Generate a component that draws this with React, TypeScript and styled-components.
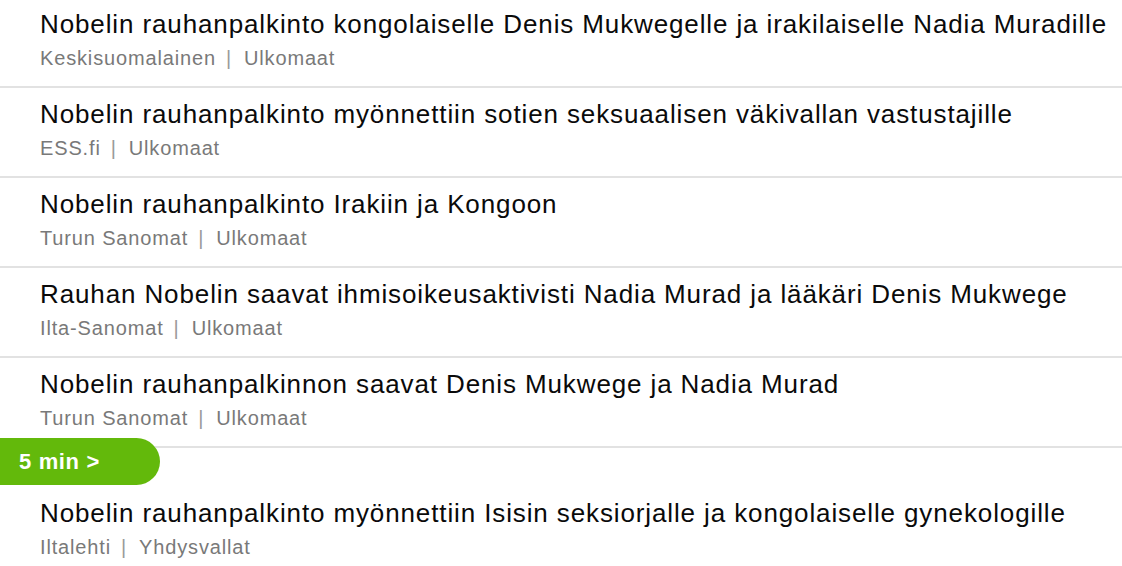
import React from "react";
import styled, { createGlobalStyle } from "styled-components";

const GlobalStyle = createGlobalStyle`
  html, body {
    margin: 0;
    padding: 0;
    background: #ffffff;
    overflow: hidden;
  }
  body {
    font-family: "Liberation Sans", Arial, Helvetica, sans-serif;
  }
`;

const Feed = styled.main`
  display: flex;
  flex-direction: column;
  margin-top: -2px;
  width: 1122px;
`;

const Item = styled.article`
  box-sizing: border-box;
  height: 90px;
  padding: 11px 0 0 40px;
  border-bottom: 2px solid #e2e2e2;
  display: flex;
  flex-direction: column;
  gap: 6px;
  &:last-child {
    border-bottom: none;
  }
`;

const Title = styled.h2`
  margin: 0;
  font-size: 26px;
  line-height: 30px;
  font-weight: 400;
  letter-spacing: 0.88px;
  color: #0a0a0a;
  white-space: nowrap;
`;

const Meta = styled.div`
  font-size: 20px;
  line-height: 26px;
  letter-spacing: 0.85px;
  color: #797979;
  white-space: nowrap;
  display: flex;
  align-items: center;
`;

const Sep = styled.span`
  margin: 0 12px 0 10px;
  color: #9a9a9a;
`;

const TimeBadge = styled.div`
  box-sizing: border-box;
  width: 160px;
  height: 47px;
  margin: -10px 0 2px;
  padding-left: 19px;
  background: #63b90b;
  border-radius: 0 24px 24px 0;
  color: #ffffff;
  font-size: 22px;
  font-weight: 700;
  letter-spacing: 0.65px;
  display: flex;
  align-items: center;
`;

type News = { title: string; source: string; section: string };

const group1: News[] = [
  {
    title:
      "Nobelin rauhanpalkinto kongolaiselle Denis Mukwegelle ja irakilaiselle Nadia Muradille",
    source: "Keskisuomalainen",
    section: "Ulkomaat",
  },
  {
    title:
      "Nobelin rauhanpalkinto myönnettiin sotien seksuaalisen väkivallan vastustajille",
    source: "ESS.fi",
    section: "Ulkomaat",
  },
  {
    title: "Nobelin rauhanpalkinto Irakiin ja Kongoon",
    source: "Turun Sanomat",
    section: "Ulkomaat",
  },
  {
    title:
      "Rauhan Nobelin saavat ihmisoikeusaktivisti Nadia Murad ja lääkäri Denis Mukwege",
    source: "Ilta-Sanomat",
    section: "Ulkomaat",
  },
  {
    title: "Nobelin rauhanpalkinnon saavat Denis Mukwege ja Nadia Murad",
    source: "Turun Sanomat",
    section: "Ulkomaat",
  },
];

const group2: News[] = [
  {
    title:
      "Nobelin rauhanpalkinto myönnettiin Isisin seksiorjalle ja kongolaiselle gynekologille",
    source: "Iltalehti",
    section: "Yhdysvallat",
  },
];

const NewsItem = ({ n }: { n: News }) => (
  <Item>
    <Title>{n.title}</Title>
    <Meta>
      <span>{n.source}</span>
      <Sep>|</Sep>
      <span>{n.section}</span>
    </Meta>
  </Item>
);

export default function App() {
  return (
    <>
      <GlobalStyle />
      <Feed>
        {group1.map((n, i) => (
          <NewsItem key={i} n={n} />
        ))}
        <TimeBadge>5 min &gt;</TimeBadge>
        {group2.map((n, i) => (
          <NewsItem key={"b" + i} n={n} />
        ))}
      </Feed>
    </>
  );
}
